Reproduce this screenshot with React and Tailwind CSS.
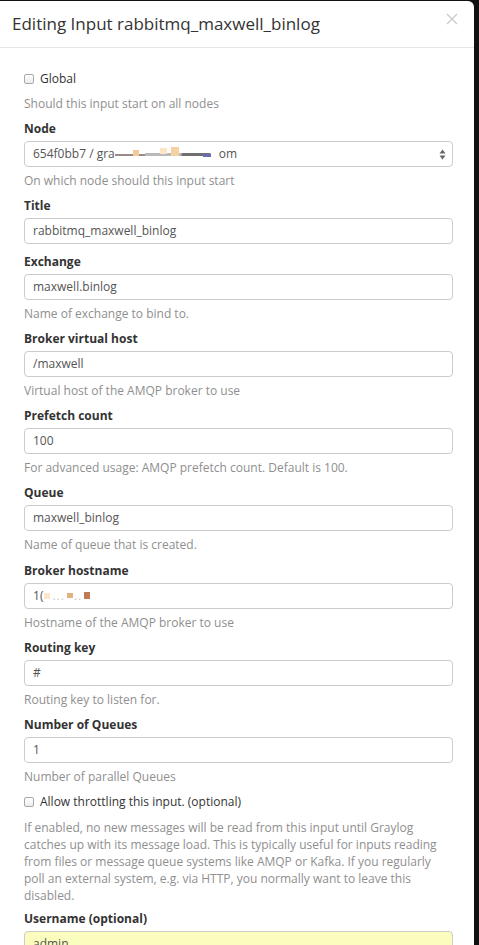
import React from 'react';

const fields = [
  { label: 'Title', value: 'rabbitmq_maxwell_binlog' },
  { label: 'Exchange', value: 'maxwell.binlog', help: 'Name of exchange to bind to.' },
  { label: 'Broker virtual host', value: '/maxwell', help: 'Virtual host of the AMQP broker to use' },
  { label: 'Prefetch count', value: '100', help: 'For advanced usage: AMQP prefetch count. Default is 100.' },
  { label: 'Queue', value: 'maxwell_binlog', help: 'Name of queue that is created.' },
  { label: 'Broker hostname', value: 'host', help: 'Hostname of the AMQP broker to use' },
  { label: 'Routing key', value: '#', help: 'Routing key to listen for.' },
  { label: 'Number of Queues', value: '1', help: 'Number of parallel Queues' },
];

function Checkbox({ label }) {
  return (
    <div className="flex items-center h-[17px]">
      <div className="w-[10px] h-[10px] rounded-[2px] border border-[#a9a9a9] bg-gradient-to-b from-white to-[#ececec]" />
      <span className="ml-[6px] text-[#333]">{label}</span>
    </div>
  );
}

function Help({ children }) {
  return <p className="mt-[5px] leading-[17px] text-[#8f8f8f]">{children}</p>;
}

function Label({ children }) {
  return <div className="font-bold text-[#333] leading-[17px] mb-[4px]">{children}</div>;
}

function HostValue() {
  // redacted hostname
  return (
    <span className="flex items-center">
      <span>1</span>
      <span>(</span>
      <span className="inline-block w-[6px] h-[6px] bg-[#fde7c8] ml-[1px]" />
      <span className="text-[#ccc] ml-[2px] tracking-[1px]">...</span>
      <span className="inline-block w-[6px] h-[5px] bg-[#e0b47e] ml-[2px]" />
      <span className="text-[#ccc] ml-[1px] tracking-[1px]">..</span>
      <span className="inline-block w-[6px] h-[7px] bg-[#c07a55] ml-[2px]" />
    </span>
  );
}

function Field({ label, value, help }) {
  return (
    <div className="mb-[8.3px]">
      <Label>{label}</Label>
      <div className="h-[26px] rounded-[4px] border border-[#cccccc] bg-white flex items-center px-[8px] text-[#555]">
        {value === 'host' ? <HostValue /> : value}
      </div>
      {help && <Help>{help}</Help>}
    </div>
  );
}

export default function App() {
  return (
    <div className="w-[479px] h-[945px] overflow-hidden bg-[#111] pt-[1px]" style={{ fontFamily: '"Open Sans", Arial, sans-serif' }}>
      <div className="w-[474px] min-h-[944px] bg-white rounded-tr-[6px] text-[12px]">
        {/* header */}
        <div className="relative h-[47px] flex items-center px-[12px] border-b border-[#e5e5e5]">
          <h4 className="text-[17px] text-[#333] leading-[24px]">Editing Input rabbitmq_maxwell_binlog</h4>
          <svg className="absolute right-[16px] top-[12px]" width="12" height="12" viewBox="0 0 12 12">
            <path d="M1 1 L11 11 M11 1 L1 11" stroke="#c9c9c9" strokeWidth="1.3" />
          </svg>
        </div>

        {/* body */}
        <div className="pl-[24px] pr-[21px] pt-[22px]">
          <div className="mb-[8px]">
            <Checkbox label="Global" />
            <p className="mt-[8px] leading-[17px] text-[#8f8f8f]">Should this input start on all nodes</p>
          </div>

          <div className="mb-[8.3px]">
            <Label>Node</Label>
            <div className="h-[26px] rounded-[4px] border border-[#cccccc] bg-white flex items-center justify-between pl-[8px] pr-[6px] text-[#555]">
              <span className="flex items-center">
                654f0bb7 / gra
                <span className="relative inline-block w-[104px] h-[12px]">
                  <span className="absolute left-0 top-[6px] w-[30px] h-[2px] bg-[#9a8a86]" />
                  <span className="absolute left-[18px] top-[2px] w-[6px] h-[6px] bg-[#f3c998]" />
                  <span className="absolute left-[30px] top-[5px] w-[36px] h-[3px] bg-[#b9b9b9]" />
                  <span className="absolute left-[45px] top-[0px] w-[7px] h-[6px] bg-[#fde6c3]" />
                  <span className="absolute left-[56px] top-[-1px] w-[8px] h-[9px] bg-[#f5d29f]" />
                  <span className="absolute left-[66px] top-[5px] w-[30px] h-[3px] bg-[#6f6f6f] rounded-full" />
                  <span className="absolute left-[88px] top-[6px] w-[8px] h-[3px] bg-[#6b6bb0]" />
                </span>
                om
              </span>
              <svg width="7" height="11" viewBox="0 0 7 11">
                <path d="M3.5 0.5 L6.5 4.5 L0.5 4.5 Z M3.5 10.5 L6.5 6.5 L0.5 6.5 Z" fill="#666" />
              </svg>
            </div>
            <Help>On which node should this input start</Help>
          </div>

          {fields.map((f) => (
            <Field key={f.label} {...f} />
          ))}

          <div className="mb-[6px]">
            <Checkbox label="Allow throttling this input. (optional)" />
            <p className="mt-[8px] leading-[17px] text-[#8f8f8f]">
              If enabled, no new messages will be read from this input until Graylog catches up with its message load. This is typically useful for inputs reading from files or message queue systems like AMQP or Kafka. If you regularly poll an external system, e.g. via HTTP, you normally want to leave this disabled.
            </p>
          </div>

          <div>
            <Label>Username (optional)</Label>
            <div className="h-[26px] rounded-[4px] border border-[#cccccc] bg-[#fafdbd] flex items-center px-[8px] text-[#555]">
              admin
            </div>
          </div>
        </div>
      </div>
    </div>
  );
}
